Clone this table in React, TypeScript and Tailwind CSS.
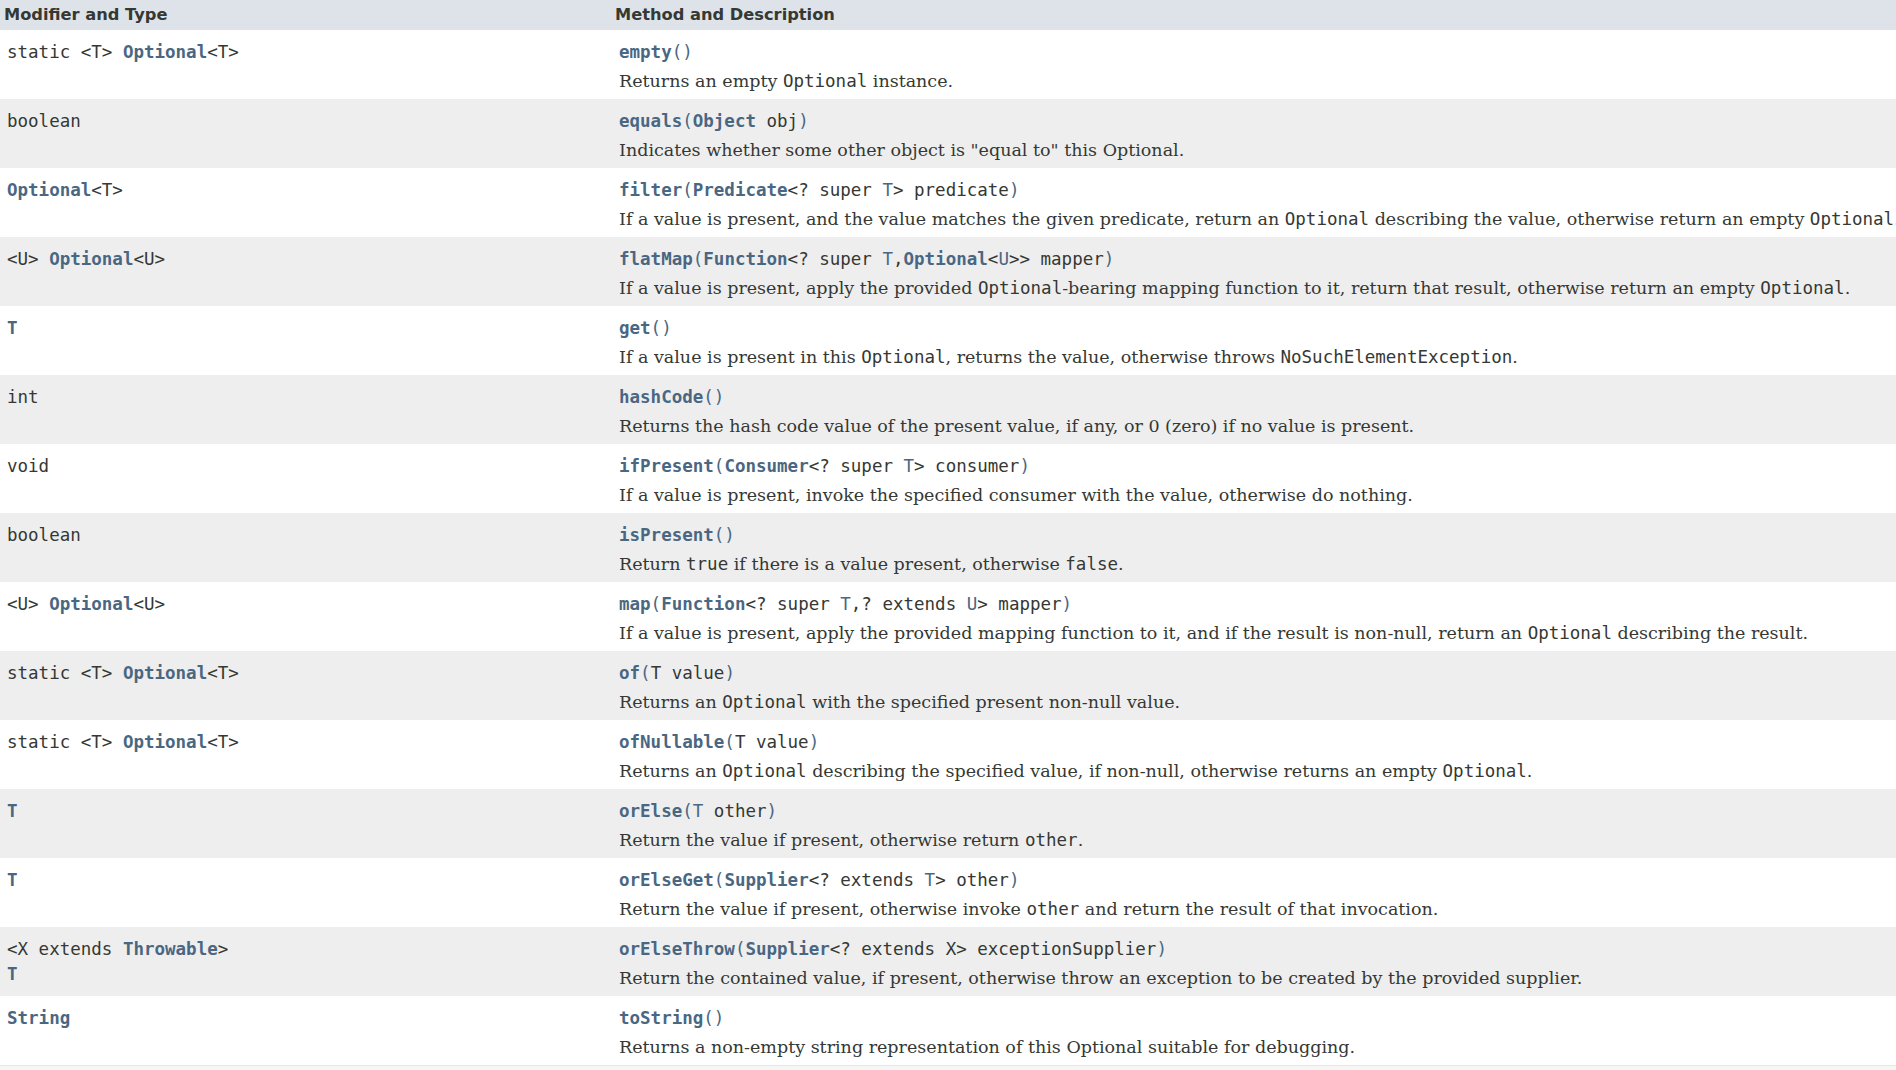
import React from "react";

const L = ({ children }: { children: React.ReactNode }) => (
  <span className="font-bold text-[#4a6782]">{children}</span>
);
const P = ({ children }: { children: React.ReactNode }) => <span className="text-[#4a6782]">{children}</span>;
const C = ({ children }: { children: React.ReactNode }) => (
  <span className="font-['DejaVu_Sans_Mono',monospace] text-[17.5px]">{children}</span>
);

type Row = { type: React.ReactNode; sig: React.ReactNode; desc: React.ReactNode };

const rows: Row[] = [
  {
    type: <>static &lt;T&gt; <L>Optional</L>&lt;T&gt;</>,
    sig: <><L>empty</L><P>()</P></>,
    desc: <>Returns an empty <C>Optional</C> instance.</>,
  },
  {
    type: <>boolean</>,
    sig: <><L>equals</L><P>(</P><L>Object</L> obj<P>)</P></>,
    desc: <>Indicates whether some other object is "equal to" this Optional.</>,
  },
  {
    type: <><L>Optional</L>&lt;T&gt;</>,
    sig: <><L>filter</L><P>(</P><L>Predicate</L>&lt;? super <P>T</P>&gt; predicate<P>)</P></>,
    desc: <>If a value is present, and the value matches the given predicate, return an <C>Optional</C> describing the value, otherwise return an empty <C>Optional</C>.</>,
  },
  {
    type: <>&lt;U&gt; <L>Optional</L>&lt;U&gt;</>,
    sig: <><L>flatMap</L><P>(</P><L>Function</L>&lt;? super <P>T</P>,<L>Optional</L>&lt;<P>U</P>&gt;&gt; mapper<P>)</P></>,
    desc: <>If a value is present, apply the provided <C>Optional</C>-bearing mapping function to it, return that result, otherwise return an empty <C>Optional</C>.</>,
  },
  {
    type: <L>T</L>,
    sig: <><L>get</L><P>()</P></>,
    desc: <>If a value is present in this <C>Optional</C>, returns the value, otherwise throws <C>NoSuchElementException</C>.</>,
  },
  {
    type: <>int</>,
    sig: <><L>hashCode</L><P>()</P></>,
    desc: <>Returns the hash code value of the present value, if any, or 0 (zero) if no value is present.</>,
  },
  {
    type: <>void</>,
    sig: <><L>ifPresent</L><P>(</P><L>Consumer</L>&lt;? super <P>T</P>&gt; consumer<P>)</P></>,
    desc: <>If a value is present, invoke the specified consumer with the value, otherwise do nothing.</>,
  },
  {
    type: <>boolean</>,
    sig: <><L>isPresent</L><P>()</P></>,
    desc: <>Return <C>true</C> if there is a value present, otherwise <C>false</C>.</>,
  },
  {
    type: <>&lt;U&gt; <L>Optional</L>&lt;U&gt;</>,
    sig: <><L>map</L><P>(</P><L>Function</L>&lt;? super <P>T</P>,? extends <P>U</P>&gt; mapper<P>)</P></>,
    desc: <>If a value is present, apply the provided mapping function to it, and if the result is non-null, return an <C>Optional</C> describing the result.</>,
  },
  {
    type: <>static &lt;T&gt; <L>Optional</L>&lt;T&gt;</>,
    sig: <><L>of</L><P>(</P>T value<P>)</P></>,
    desc: <>Returns an <C>Optional</C> with the specified present non-null value.</>,
  },
  {
    type: <>static &lt;T&gt; <L>Optional</L>&lt;T&gt;</>,
    sig: <><L>ofNullable</L><P>(</P>T value<P>)</P></>,
    desc: <>Returns an <C>Optional</C> describing the specified value, if non-null, otherwise returns an empty <C>Optional</C>.</>,
  },
  {
    type: <L>T</L>,
    sig: <><L>orElse</L><P>(</P><P>T</P> other<P>)</P></>,
    desc: <>Return the value if present, otherwise return <C>other</C>.</>,
  },
  {
    type: <L>T</L>,
    sig: <><L>orElseGet</L><P>(</P><L>Supplier</L>&lt;? extends <P>T</P>&gt; other<P>)</P></>,
    desc: <>Return the value if present, otherwise invoke <C>other</C> and return the result of that invocation.</>,
  },
  {
    type: <>&lt;X extends <L>Throwable</L>&gt;<br /><L>T</L></>,
    sig: <><L>orElseThrow</L><P>(</P><L>Supplier</L>&lt;? extends X&gt; exceptionSupplier<P>)</P></>,
    desc: <>Return the contained value, if present, otherwise throw an exception to be created by the provided supplier.</>,
  },
  {
    type: <L>String</L>,
    sig: <><L>toString</L><P>()</P></>,
    desc: <>Returns a non-empty string representation of this Optional suitable for debugging.</>,
  },
];

const App = () => {
  return (
    <div className="min-h-screen w-full overflow-hidden bg-[#f6f6f6] text-[#353833]">
      <div className="w-max min-w-full border-b border-[#e6e6e6] bg-white">
        <div className="flex h-[30px] items-center bg-[#dee3e9] font-['DejaVu_Sans',sans-serif] text-[16.25px] font-bold">
          <div className="w-[612px] shrink-0 pl-[4px]">Modifier and Type</div>
          <div className="pl-[3px]">Method and Description</div>
        </div>
        {rows.map((r, i) => (
          <div key={i} className={`flex h-[69px] ${i % 2 === 0 ? "bg-white" : "bg-[#eeeeef]"}`}>
            <div className="w-[612px] shrink-0 whitespace-nowrap pl-[7px] pt-[10px] font-['DejaVu_Sans_Mono',monospace] text-[17.5px] leading-[24.5px]">
              {r.type}
            </div>
            <div className="whitespace-nowrap pl-[7px] pr-[12px] pt-[10px]">
              <div className="font-['DejaVu_Sans_Mono',monospace] text-[17.5px] leading-[24px]">{r.sig}</div>
              <div className="mt-[6px] font-['DejaVu_Serif',serif] text-[17.5px] leading-[22px]">{r.desc}</div>
            </div>
          </div>
        ))}
      </div>
    </div>
  );
};

export default App;
